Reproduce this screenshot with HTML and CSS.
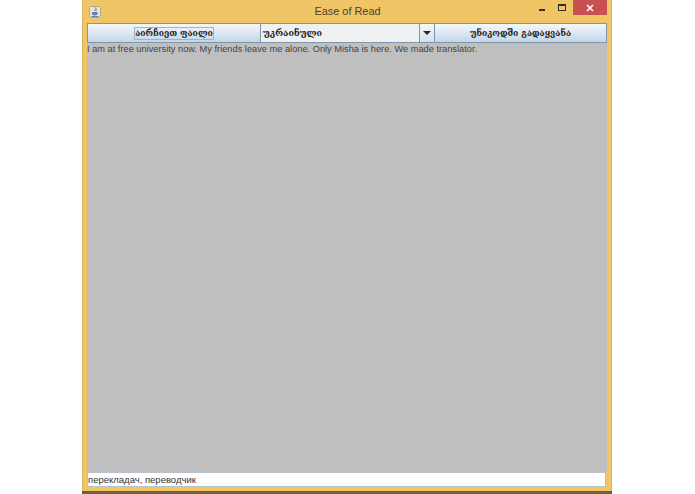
FILE: index.html
```html
<!DOCTYPE html>
<html lang="ka">
<head>
<meta charset="utf-8">
<title>Ease of Read</title>
<link rel="stylesheet" href="styles.css">
</head>
<body>
<div class="window">
  <header class="titlebar">
    <span class="app-icon">
      <svg width="12" height="12" viewBox="0 0 12 12">
        <rect x="0.5" y="0.5" width="11" height="11" rx="1" fill="#e8e4d6" stroke="#b0a98f"/>
        <path d="M6.500 1.500c1 1.300-1.300 2-.7 3.500M8 3c-.9.700-1.300 1.200-.9 2.200" fill="none" stroke="#d0602a" stroke-width="1"/>
        <path d="M3 6h5.500v2c0 1-.9 1.400-2.700 1.400S3 9 3 8z" fill="#5a80b8"/>
        <path d="M2.500 10.500h7" stroke="#5a80b8"/>
      </svg>
    </span>
    <span class="title">Ease of Read</span>
    <div class="controls">
      <span class="ctl min"></span>
      <span class="ctl max"></span>
      <span class="close">
        <svg width="8" height="8" viewBox="0 0 8 8"><path d="M1 1l6 6M7 1L1 7" stroke="#fff" stroke-width="1.600"/></svg>
      </span>
    </div>
  </header>
  <div class="client">
    <div class="toolbar">
      <button class="btn first"><span class="focus">აირჩიეთ ფაილი</span></button>
      <div class="combo">
        <span class="combo-value">უკრაინული</span>
        <span class="combo-arrow"><svg width="8" height="4" viewBox="0 0 8 4"><path d="M0 0h8L4 4z" fill="#20262e"/></svg></span>
      </div>
      <button class="btn last">უნიკოდში გადაყვანა</button>
    </div>
    <div class="text-area">I am at free university now. My friends leave me alone. Only Misha is here. We made translator.</div>
    <div class="status-field">перекладач, переводчик</div>
  </div>
</div>
<div class="taskbar-edge"></div>
</body>
</html>
```
FILE: styles.css
```css
html, body {
  margin: 0;
  padding: 0;
  background: #fff;
  width: 695px;
  height: 494px;
  overflow: hidden;
}
body {
  display: flex;
  flex-direction: column;
  align-items: flex-start;
  font-family: "Liberation Sans", Arial, sans-serif;
}
.window {
  margin-left: 82px;
  width: 530px;
  height: 491px;
  box-sizing: border-box;
  background: #efc565;
  padding: 0 4px 4px;
  display: flex;
  flex-direction: column;
  border-left: 1px solid #d9b45e;
  border-right: 1px solid #d9b45e;
}
.titlebar {
  height: 23px;
  flex: none;
  display: flex;
  align-items: center;
  position: relative;
}
.app-icon {
  display: flex;
  margin-left: 2px;
}
.title {
  position: absolute;
  left: 1px;
  right: 0;
  top: 3px;
  text-align: center;
  font-size: 10.900px;
  line-height: 16px;
  color: #4a4030;
}
.controls {
  margin-left: auto;
  display: flex;
  align-items: flex-start;
  align-self: flex-start;
  height: 15px;
}
.ctl {
  width: 20px;
  height: 15px;
  position: relative;
}
.min::after {
  content: "";
  position: absolute;
  left: 6px;
  top: 9px;
  width: 6px;
  height: 2px;
  background: #33302a;
}
.max::after {
  content: "";
  position: absolute;
  left: 5px;
  top: 4px;
  width: 6px;
  height: 4px;
  border: 1px solid #33302a;
  border-top-width: 2px;
}
.close {
  width: 34px;
  height: 15px;
  background: #c75050;
  display: flex;
  align-items: center;
  justify-content: center;
}
.client {
  flex: 1;
  display: flex;
  flex-direction: column;
  min-height: 0;
}
.toolbar {
  height: 20px;
  flex: none;
  display: flex;
}
.btn {
  margin: 0;
  padding: 0;
  height: 20px;
  box-sizing: border-box;
  border: 1px solid #7f97ad;
  background: linear-gradient(#f3f7fb 0%, #dfe9f3 45%, #c3d5e7 100%);
  font-family: "DejaVu Serif", "DejaVu Sans", serif;
  font-weight: bold;
  font-size: 8.600px;
  color: #222;
  display: flex;
  align-items: center;
  justify-content: center;
}
.first {
  width: 174px;
}
.focus {
  box-sizing: border-box;
  width: 80px;
  height: 13px;
  border: 1px solid #9fb4c8;
  line-height: 11px;
  white-space: nowrap;
}
.combo {
  width: 173px;
  height: 20px;
  box-sizing: border-box;
  display: flex;
  border: 1px solid #7f97ad;
  border-left: 0;
  border-right: 0;
  background: #eef0f2;
}
.combo-value {
  flex: 1;
  padding-left: 2px;
  font-family: "DejaVu Serif", "DejaVu Sans", serif;
  font-weight: bold;
  font-size: 9px;
  line-height: 18px;
  color: #222;
}
.combo-arrow {
  width: 14px;
  border-left: 1px solid #7f97ad;
  background: linear-gradient(#f3f7fb, #d3e0ec);
  display: flex;
  align-items: center;
  justify-content: center;
}
.last {
  flex: 1;
}
.text-area {
  flex: 1;
  background: #bfbfbf;
  color: #444;
  font-size: 9.260px;
  line-height: 12px;
  white-space: nowrap;
}
.status-field {
  height: 15px;
  flex: none;
  box-sizing: border-box;
  background: #fff;
  border: 1px solid #b8c2cc;
  margin-right: 1px;
  font-size: 9.500px;
  line-height: 13px;
  color: #333;
}
.taskbar-edge {
  margin-left: 82px;
  width: 530px;
  height: 3px;
  background: #6f5f3a;
}
```
